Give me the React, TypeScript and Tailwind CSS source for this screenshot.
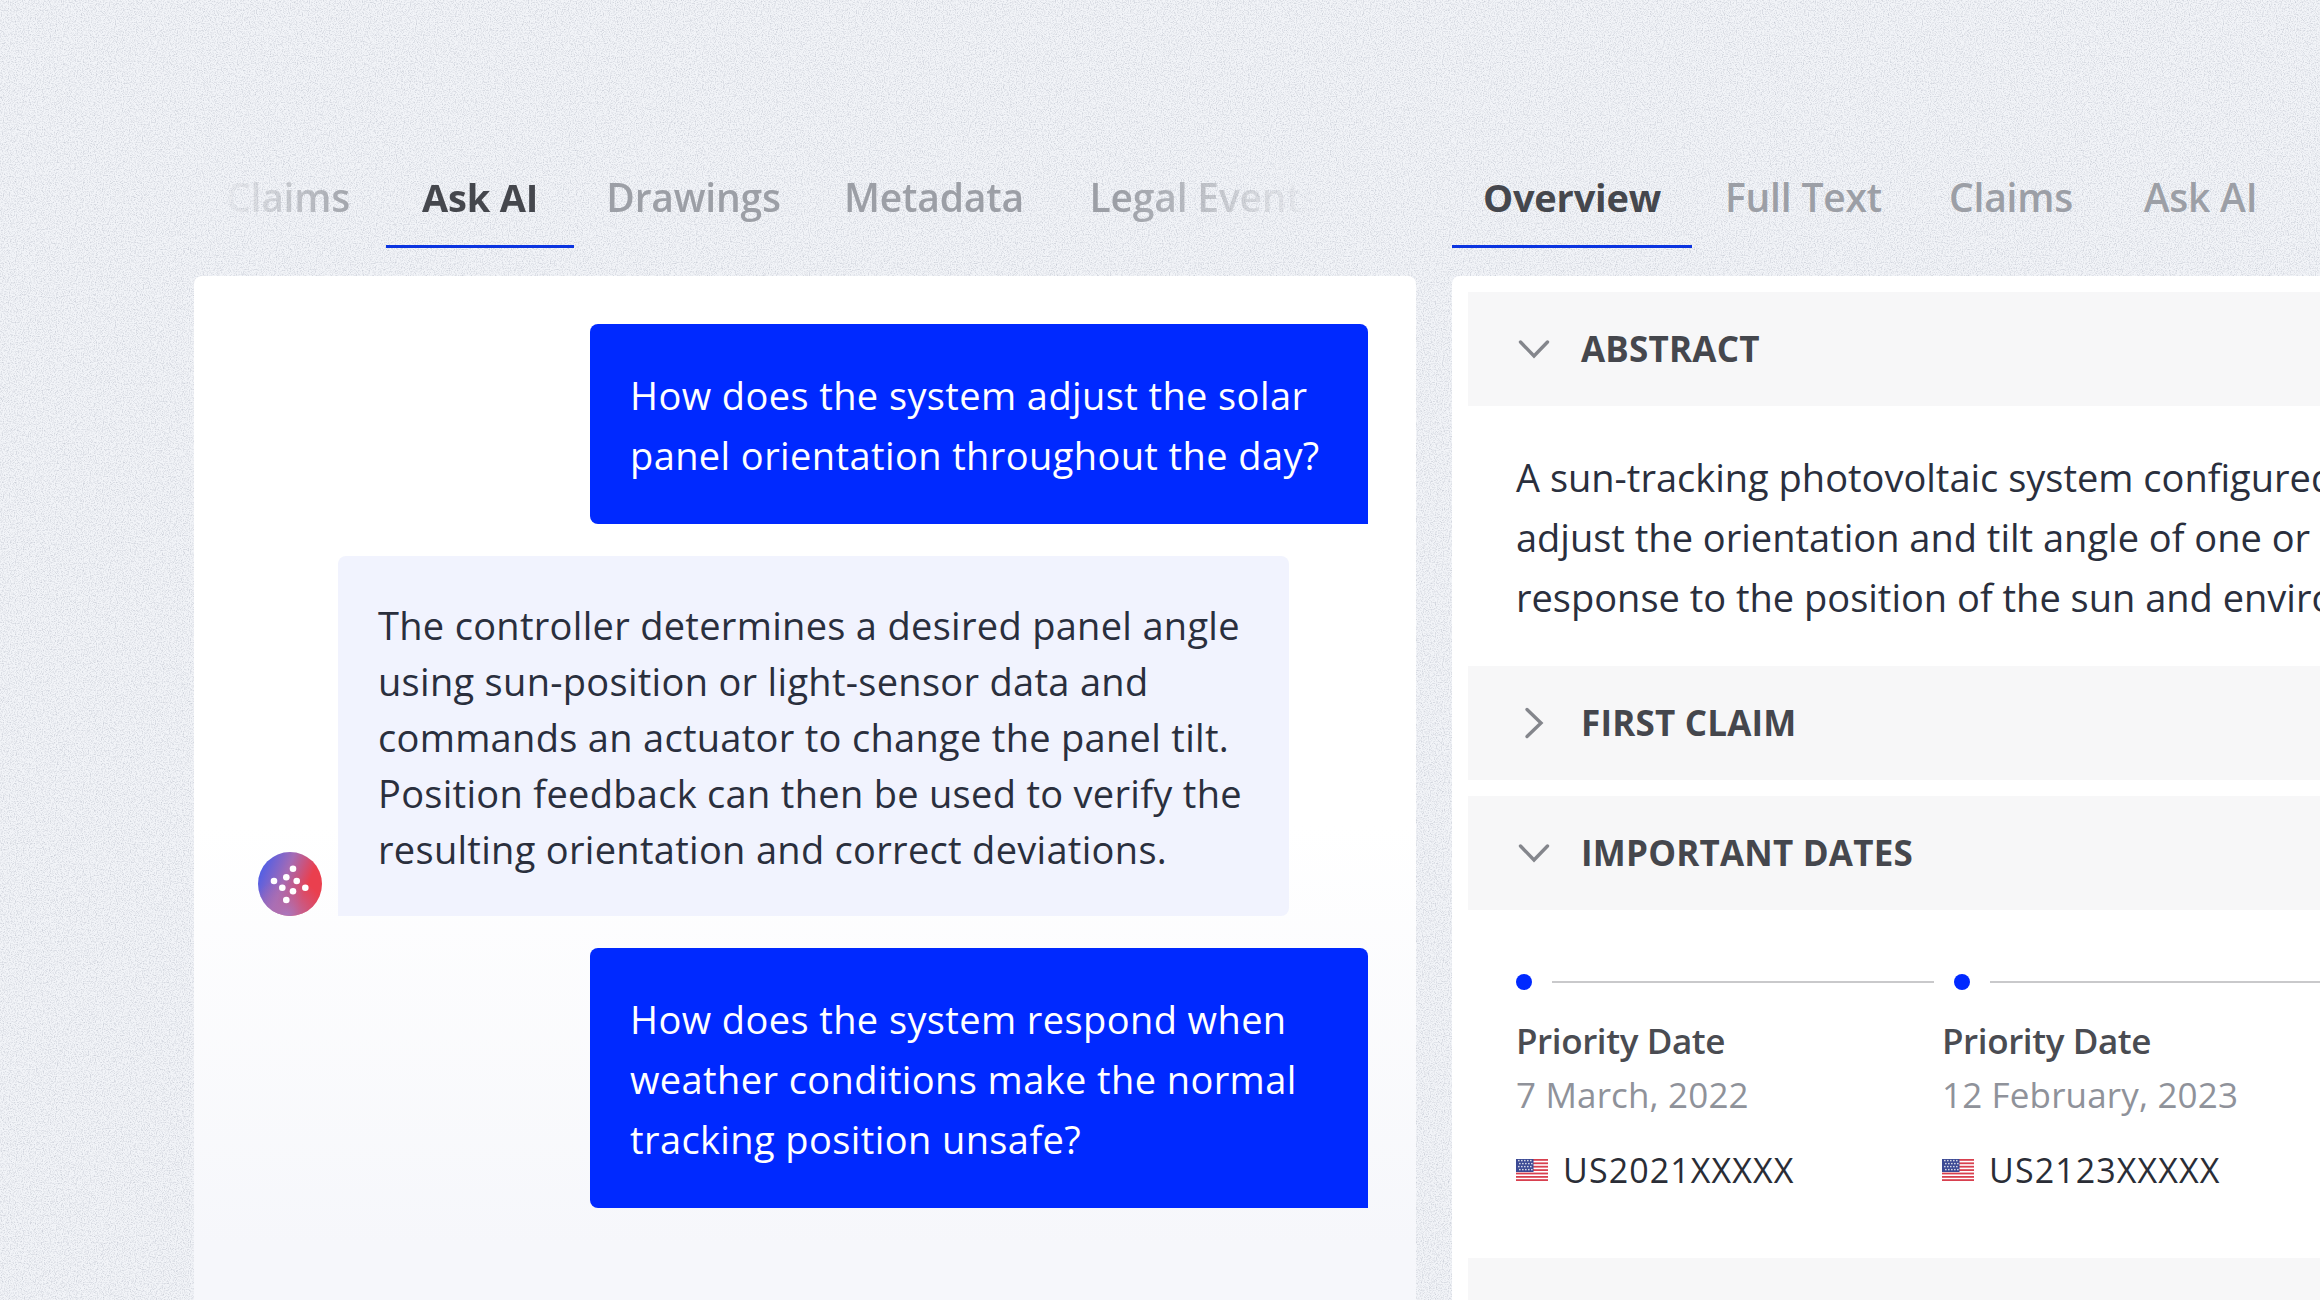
import { ReactNode } from 'react'

const leftTabs = [
  { label: 'Claims', width: 'w-[196px]' },
  { label: 'Ask AI', width: 'w-[188px]' },
  { label: 'Drawings', width: 'w-[239px]' },
  { label: 'Metadata', width: 'w-[242px]' },
  { label: 'Legal Events', width: 'w-[300px]' },
]
const rightTabs = [
  { label: 'Overview', width: 'w-[240px]' },
  { label: 'Full Text', width: 'w-[223px]' },
  { label: 'Claims', width: 'w-[192px]' },
  { label: 'Ask AI', width: 'w-[187px]' },
]

function Tabs({ items, active }: { items: { label: string; width: string }[]; active: string }) {
  return (
    <div className="flex h-[100px] items-stretch">
      {items.map((tab) => (
        <div
          key={tab.label}
          className={`flex h-[100px] shrink-0 items-center justify-center whitespace-nowrap border-b-[3px] pt-[2px] tracking-[-0.2px] ${tab.width} ${
            tab.label === active
              ? 'border-[#0b34e0] text-[38px] font-bold text-[#45474d]'
              : 'border-transparent text-[39px] font-semibold text-[#9c9fa6]'
          }`}
        >
          {tab.label}
        </div>
      ))}
    </div>
  )
}

function Avatar() {
  const dots = [
    [35, 16.7],
    [16, 29],
    [28.3, 25.3],
    [38.7, 29],
    [24.3, 35.7],
    [35, 39.3],
    [47.3, 35.7],
    [28.3, 48],
  ]
  return (
    <svg width="64" height="64" viewBox="0 0 64 64" className="shrink-0">
      <defs>
        <linearGradient id="av" x1="0" y1="0.15" x2="1" y2="0.55">
          <stop offset="0" stopColor="#3f5cf0" />
          <stop offset="0.45" stopColor="#a56bb4" />
          <stop offset="0.8" stopColor="#ea3f4e" />
        </linearGradient>
        <radialGradient id="av2" cx="0.45" cy="1" r="0.6">
          <stop offset="0" stopColor="#a878c0" />
          <stop offset="1" stopColor="#b56aa5" stopOpacity="0" />
        </radialGradient>
      </defs>
      <circle cx="32" cy="32" r="32" fill="url(#av)" />
      <circle cx="32" cy="32" r="32" fill="url(#av2)" />
      {dots.map(([x, y]) => (
        <circle key={`${x}-${y}`} cx={x} cy={y} r="3.3" fill="#fff" />
      ))}
    </svg>
  )
}

function Flag() {
  return (
    <svg width="32" height="22" viewBox="0 0 32 22" className="shrink-0">
      <rect width="32" height="22" fill="#fff" />
      {[0, 3.4, 6.8, 10.2, 13.6, 17, 20.2].map((y) => (
        <rect key={y} y={y} width="32" height="1.8" fill="#d8404f" />
      ))}
      <rect width="17.5" height="13" fill="#3c4a94" />
      {[1.5, 4.5, 7.5, 10.5].map((y, i) =>
        [2, 5, 8, 11, 14].map((x) => (
          <rect key={`${x}-${y}`} x={x + (i % 2)} y={y - 0.6} width="1.6" height="1.4" fill="#d5d8e6" />
        )),
      )}
    </svg>
  )
}

function UserBubble({ children }: { children: ReactNode }) {
  return (
    <div className="ml-auto w-[778px] whitespace-nowrap rounded-t-[8px] rounded-bl-[8px] bg-[#0029ff] px-[40px] pb-[39px] pt-[41px] text-[38px] leading-[60px] tracking-[0.4px] text-white">
      {children}
    </div>
  )
}

function Section({ title, open }: { title: string; open: boolean }) {
  return (
    <div className="flex h-[114px] items-center bg-[#f7f7f8]">
      <div className="flex w-[114px] shrink-0 justify-center pl-[18px]">
        {open ? (
          <svg width="32" height="20" viewBox="0 0 32 20" fill="none" stroke="#84868c" strokeWidth="3.4" strokeLinecap="round">
            <path d="M2.5 3l13.5 14L29.5 3" />
          </svg>
        ) : (
          <svg width="20" height="32" viewBox="0 0 20 32" fill="none" stroke="#84868c" strokeWidth="3.4" strokeLinecap="round">
            <path d="M3 2.5l14 13.5L3 29.5" />
          </svg>
        )}
      </div>
      <span className="-ml-[1px] text-[35px] font-bold tracking-[0.2px] text-[#45474d]">{title}</span>
    </div>
  )
}

function DateCol({ date, number }: { date: string; number: string }) {
  return (
    <div className="w-[426px] shrink-0">
      <div className="text-[35px] leading-[52px] font-semibold tracking-[-0.4px] text-[#4a4c52]">Priority Date</div>
      <div className="mt-[2px] text-[35px] leading-[52px] tracking-[0.15px] text-[#8f929a]">{date}</div>
      <div className="mt-[23px] flex items-center gap-[15px]">
        <Flag />
        <span className="text-[34px] leading-[52px] tracking-[1.1px] text-[#2a2d36]">{number}</span>
      </div>
    </div>
  )
}

export default function App() {
  return (
    <div className="relative h-[1300px] w-[2320px] overflow-hidden bg-[#f2f4f8] font-['Open_Sans',sans-serif]">
      <svg className="absolute inset-0" width="2320" height="1300">
        <filter id="grain">
          <feTurbulence type="fractalNoise" baseFrequency="0.85" numOctaves="2" seed="4" />
          <feColorMatrix values="0 0 0 0 0.35 0 0 0 0 0.38 0 0 0 0 0.46 0 0 0 1.8 -0.78" />
        </filter>
        <rect width="2320" height="1300" filter="url(#grain)" opacity="0.6" />
      </svg>

      <div className="relative flex gap-[36px] pl-[194px] pt-[148px]">
        <div className="w-[1222px] shrink-0">
          <div className="-ml-[4px] w-[1140px] overflow-hidden [mask-image:linear-gradient(to_right,transparent_30px,black_170px,black_930px,transparent_1125px)]">
            <Tabs items={leftTabs} active="Ask AI" />
          </div>
          <div className="mt-[28px] flex h-[1100px] flex-col gap-[32px] rounded-t-[8px] bg-[linear-gradient(to_bottom,#ffffff_50%,#f6f7fb_88%)] p-[48px]">
            <UserBubble>
              How does the system adjust the solar
              <br />
              panel orientation throughout the day?
            </UserBubble>
            <div className="flex items-end gap-[16px] pl-[16px]">
              <Avatar />
              <div className="w-[951px] whitespace-nowrap rounded-t-[8px] rounded-br-[8px] bg-[#f1f3fe] px-[40px] pb-[39px] pt-[41px] text-[38px] leading-[56px] tracking-[0.3px] text-[#2a2f3d]">
                The controller determines a desired panel angle
                <br />
                using sun-position or light-sensor data and
                <br />
                commands an actuator to change the panel tilt.
                <br />
                Position feedback can then be used to verify the
                <br />
                resulting orientation and correct deviations.
              </div>
            </div>
            <UserBubble>
              How does the system respond when
              <br />
              weather conditions make the normal
              <br />
              tracking position unsafe?
            </UserBubble>
          </div>
        </div>

        <div className="w-[1000px] shrink-0">
          <Tabs items={rightTabs} active="Overview" />
          <div className="mt-[28px] h-[1100px] overflow-hidden rounded-t-[8px] bg-white px-[16px] pt-[16px]">
            <Section title="ABSTRACT" open />
            <div className="h-[260px] whitespace-nowrap px-[48px] pb-[39px] pt-[41px] text-[38px] leading-[60px] tracking-[0px] text-[#2a2f3d]">
              A sun-tracking photovoltaic system configured to
              <br />
              adjust the orientation and tilt angle of one or more
              <br />
              response to the position of the sun and environmental
            </div>
            <Section title="FIRST CLAIM" open={false} />
            <div className="h-[16px]" />
            <Section title="IMPORTANT DATES" open />
            <div className="h-[348px] px-[48px] pt-[64px]">
              <div className="flex items-center gap-[20px]">
                <span className="h-[16px] w-[16px] shrink-0 rounded-full bg-[#0029ff]" />
                <span className="h-[2px] w-[382px] shrink-0 bg-[#c9c9cb]" />
                <span className="h-[16px] w-[16px] shrink-0 rounded-full bg-[#0029ff]" />
                <span className="h-[2px] w-[500px] shrink-0 bg-[#c9c9cb]" />
              </div>
              <div className="mt-[25px] flex">
                <DateCol date="7 March, 2022" number="US2021XXXXX" />
                <DateCol date="12 February, 2023" number="US2123XXXXX" />
              </div>
            </div>
            <div className="h-[114px] bg-[#f7f7f8]" />
          </div>
        </div>
      </div>
    </div>
  )
}
